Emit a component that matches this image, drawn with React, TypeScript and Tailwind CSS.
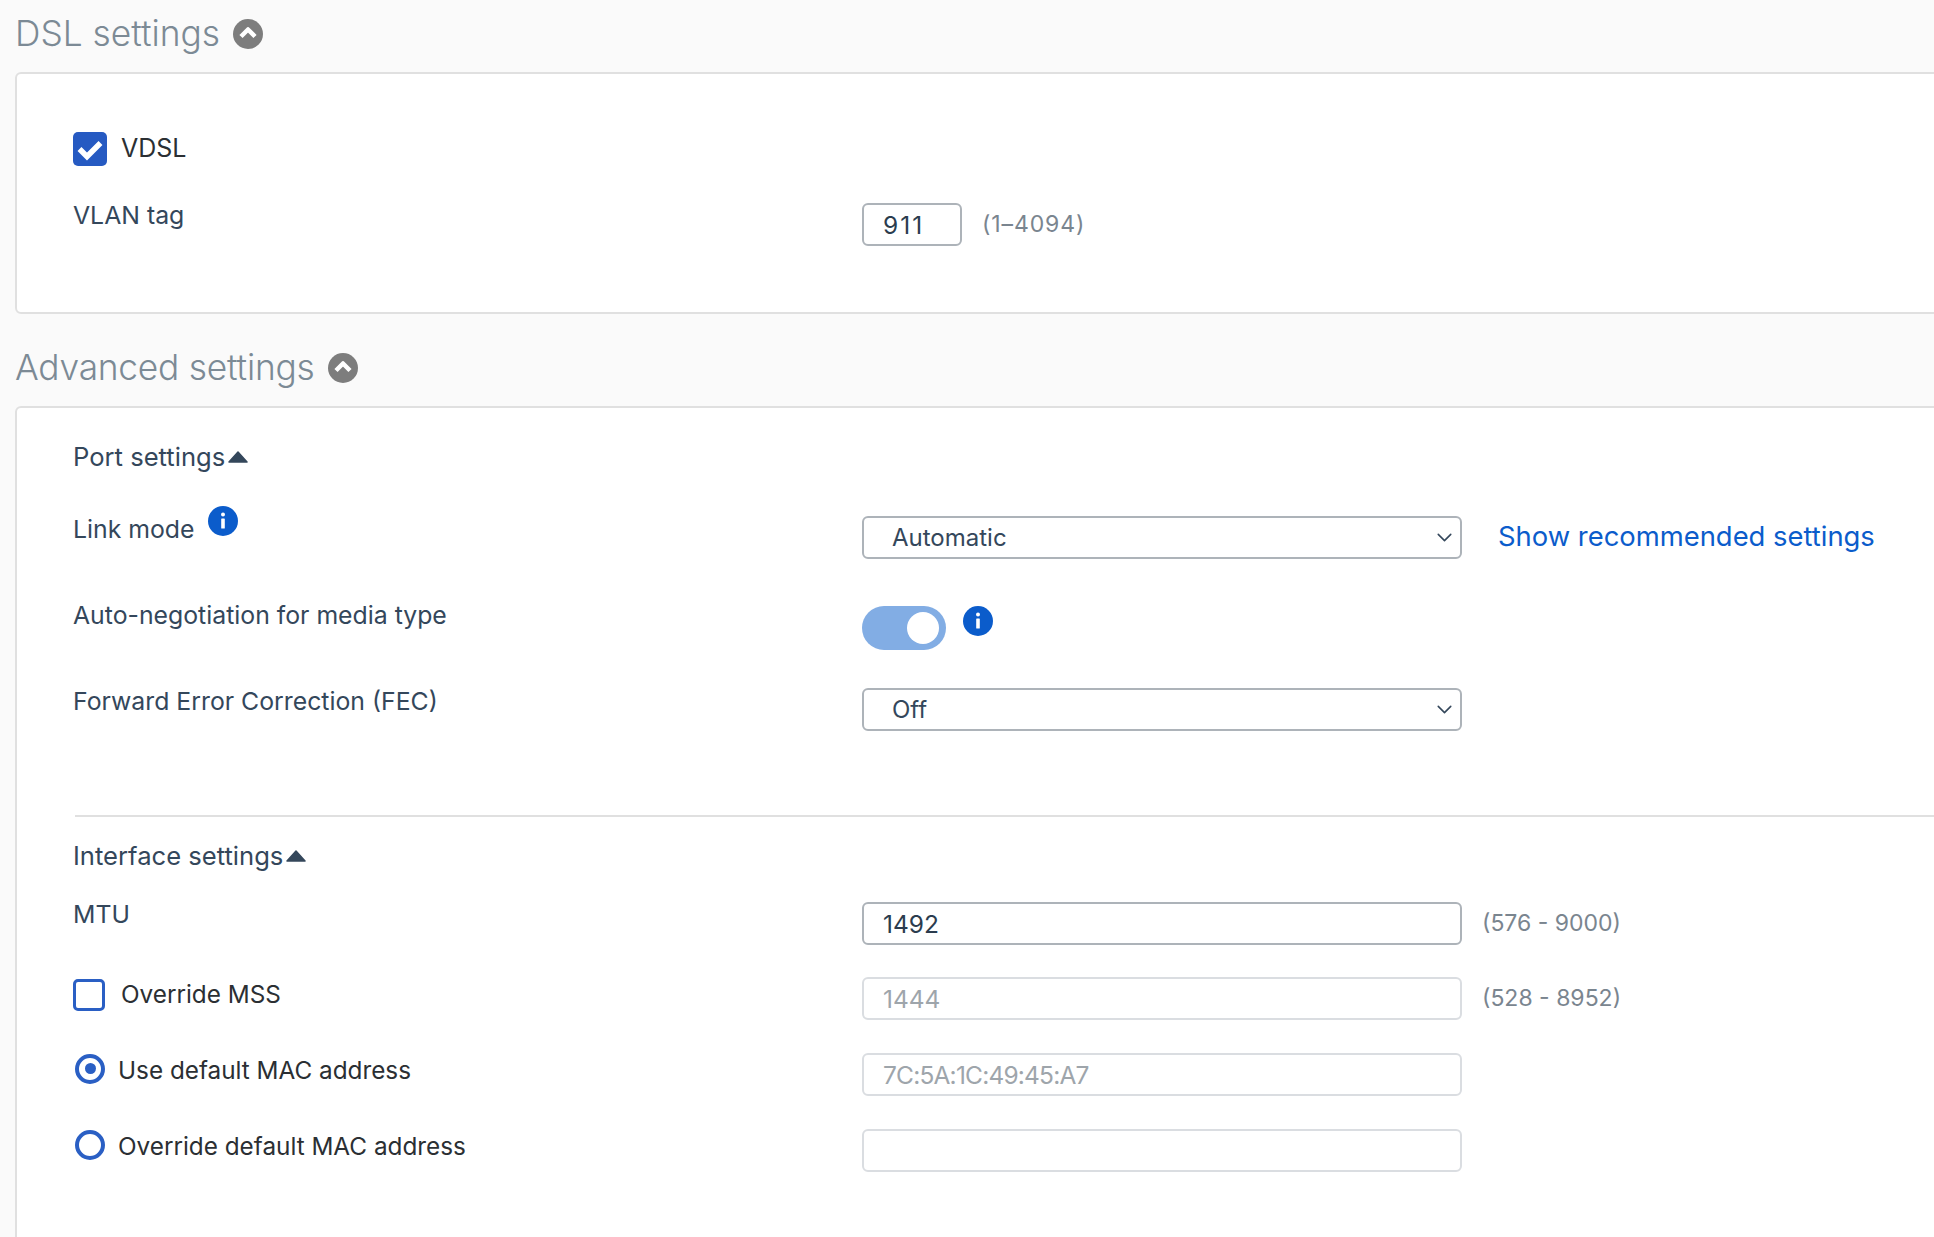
import { ChevronDown } from 'lucide-react';

const font = "[font-family:Inter,'Noto_Sans',sans-serif]";

function CollapseIcon() {
  return (
    <svg viewBox="0 0 30 30" className="size-[30px] shrink-0" aria-hidden>
      <circle cx="15" cy="15" r="15" fill="#7d7d7d" />
      <path d="M8 17.5 15 10.5 22 17.5" fill="none" stroke="#fff" strokeWidth="4.5" strokeLinejoin="round" />
    </svg>
  );
}

function InfoIcon() {
  return (
    <svg viewBox="0 0 30 30" className="size-[30px] shrink-0" aria-hidden>
      <circle cx="15" cy="15" r="15" fill="#0b5ccb" />
      <circle cx="15" cy="8.5" r="2" fill="#fff" />
      <rect x="13.2" y="12.5" width="3.6" height="10" rx="0.6" fill="#fff" />
    </svg>
  );
}

function Caret() {
  return (
    <svg viewBox="0 0 20 12" className="h-3 w-5 shrink-0" aria-hidden>
      <path d="M10 1 19 11H1Z" fill="#34475b" stroke="#34475b" strokeWidth="1.5" strokeLinejoin="round" />
    </svg>
  );
}

function SectionTitle({ title, className, textClass = '' }: { title: string; className: string; textClass?: string }) {
  return (
    <div className={`flex items-center gap-[13px] ${className}`}>
      <h2 className={`text-[35.3px] leading-[40px] font-[350] text-[#7c8a95] ${textClass}`}>{title}</h2>
      <CollapseIcon />
    </div>
  );
}

function Label({ children, className = '' }: { children: React.ReactNode; className?: string }) {
  return (
    <div className={`flex h-[30px] w-[789px] shrink-0 items-center text-[24.8px] leading-[30px] text-[#34475b] ${className}`}>
      {children}
    </div>
  );
}

function TextBox({
  value,
  muted,
  wide = true,
  textClass = '',
}: {
  value: string;
  muted?: boolean;
  wide?: boolean;
  textClass?: string;
}) {
  return (
    <input
      readOnly
      value={value}
      className={`h-[43px] rounded-[6px] border-2 bg-white px-[19px] text-[24.5px] outline-none ${wide ? 'w-[600px]' : 'w-[100px]'} ${
        muted ? 'border-[#dadde1] text-[#9ea5ab]' : 'border-[#adb3b9] text-[#2b3c4e]'
      } ${textClass}`}
    />
  );
}

function Dropdown({ value }: { value: string }) {
  return (
    <div className="relative w-[600px]">
      <select
        defaultValue={value}
        className="h-[43px] w-full appearance-none rounded-[6px] border-2 border-[#adb3b9] bg-white pl-[28px] text-[24px] text-[#34475b] outline-none"
      >
        <option>{value}</option>
      </select>
      <ChevronDown className="absolute top-[9px] right-[5px] size-[25px] text-[#34475b]" strokeWidth={1.5} />
    </div>
  );
}

function Hint({ children, className = '' }: { children: string; className?: string }) {
  return <span className={`ml-[20px] text-[23px] text-[#7a858f] ${className}`}>{children}</span>;
}

function Radio({ checked }: { checked?: boolean }) {
  return (
    <span className="-mt-[4px] ml-[2px] flex size-[30px] shrink-0 items-center justify-center rounded-full border-[4px] border-[#2a5fc4] bg-white">
      {checked ? <span className="size-[11px] rounded-full bg-[#2a5fc4]" /> : null}
    </span>
  );
}

export default function App() {
  return (
    <div className={`h-[1237px] w-[1934px] overflow-hidden bg-[#fafafa] pl-[15px] ${font}`}>
      <SectionTitle title="DSL settings" className="h-[72px] pb-[4px]" />

      <section className="h-[242px] w-[2000px] rounded-[6px] border-2 border-[#e0e0e0] bg-white pt-[58px] pl-[56px]">
        <div className="flex h-[34px] items-center gap-[14px]">
          <span className="flex size-[34px] items-center justify-center rounded-[5px] bg-[#265ac2]">
            <svg viewBox="0 0 34 34" className="size-[34px]" aria-hidden>
              <path d="M6.5 17 14 24.5 27.5 11" fill="none" stroke="#fff" strokeWidth="5.5" />
            </svg>
          </span>
          <span className="text-[25px] text-[#2b2f33]">VDSL</span>
        </div>
        <div className="mt-[37px] flex items-start">
          <Label className="-mt-[3px]">VLAN tag</Label>
          <TextBox value="911" wide={false} textClass="tracking-[2px]" />
          <div className="flex h-[43px] items-center">
            <Hint className="tracking-[0.9px]">(1–4094)</Hint>
          </div>
        </div>
      </section>

      <SectionTitle title="Advanced settings" className="h-[92px] pt-[15px]" textClass="tracking-[-0.22px]" />

      <section className="h-[900px] w-[2000px] rounded-[6px] border-2 border-[#e0e0e0] bg-white pt-[34px] pl-[56px]">
        <div className="flex h-[30px] items-center gap-[3px] text-[25.6px] text-[#34475b]">
          Port settings <Caret />
        </div>

        <div className="mt-[44px] flex items-start">
          <Label className="-mt-[2px]">
            <span>Link mode</span>
            <span className="-mt-[16px] ml-[13px]">
              <InfoIcon />
            </span>
          </Label>
          <Dropdown value="Automatic" />
          <a className="ml-[36px] -mt-px flex h-[43px] items-center text-[27.4px] text-[#0b5ccb]">Show recommended settings</a>
        </div>

        <div className="mt-[47px] flex items-start">
          <Label className="-mt-[6px]">Auto-negotiation for media type</Label>
          <div className="flex h-[44px] w-[84px] items-center justify-end rounded-full bg-[#82ade4] pr-[7px]">
            <span className="size-[32px] rounded-full bg-white" />
          </div>
          <span className="ml-[17px]">
            <InfoIcon />
          </span>
        </div>

        <div className="mt-[38px] flex items-start">
          <Label className="-mt-[2px]">Forward Error Correction (FEC)</Label>
          <Dropdown value="Off" />
        </div>

        <hr className="mt-[84px] ml-[2px] border-t-2 border-[#e0e0e0]" />

        <div className="mt-[24px] flex h-[30px] items-center gap-[3px] text-[25.6px] text-[#34475b]">
          Interface settings <Caret />
        </div>

        <div className="mt-[31px] flex items-start">
          <Label className="-mt-[3px]">MTU</Label>
          <TextBox value="1492" />
          <div className="flex h-[43px] items-center">
            <Hint>(576 - 9000)</Hint>
          </div>
        </div>

        <div className="mt-[32px] flex items-center">
          <div className="flex w-[789px] shrink-0 -translate-y-[4px] items-center gap-[16px] text-[24.3px] text-[#2b2f33]">
            <span className="size-[32px] rounded-[5px] border-[3px] border-[#2a5fc4] bg-white" />
            Override MSS
          </div>
          <TextBox value="1444" muted />
          <Hint>(528 - 8952)</Hint>
        </div>

        <div className="mt-[33px] flex items-center">
          <div className="flex w-[789px] shrink-0 -translate-y-[4px] items-center gap-[13px] text-[24.3px] text-[#2b2f33]">
            <Radio checked />
            Use default MAC address
          </div>
          <TextBox value="7C:5A:1C:49:45:A7" muted textClass="tracking-[-0.8px]" />
        </div>

        <div className="mt-[33px] flex items-center">
          <div className="flex w-[789px] shrink-0 -translate-y-[4px] items-center gap-[13px] text-[24.3px] text-[#2b2f33]">
            <Radio />
            Override default MAC address
          </div>
          <TextBox value="" muted />
        </div>
      </section>
    </div>
  );
}
